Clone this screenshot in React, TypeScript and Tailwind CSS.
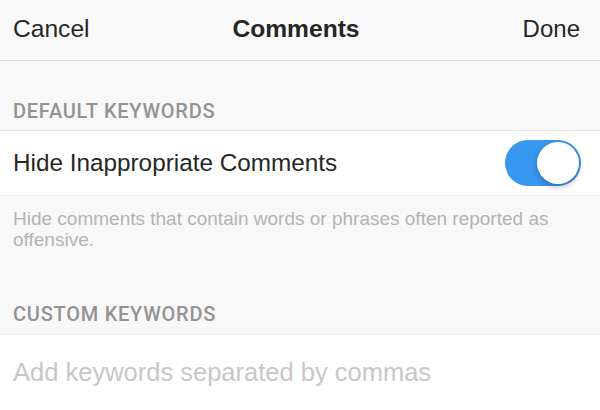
const font = { fontFamily: '"Liberation Sans", Arial, sans-serif' };

const SectionHeader = ({ label, spacing }: { label: string; spacing: string }) => (
  <div
    className={`px-[13px] ${spacing} text-[20px] leading-[19px] font-medium tracking-[0.75px] text-[#939393]`}
    style={{ fontFamily: 'Roboto, "Liberation Sans", sans-serif' }}
  >
    {label}
  </div>
);

const Toggle = ({ on }: { on: boolean }) => (
  <div
    className={`relative h-[46px] w-[76px] rounded-full ${on ? "bg-[#3897f0]" : "bg-[#e5e5e5]"}`}
  >
    <div
      className={`absolute top-[2px] h-[42px] w-[42px] rounded-full bg-white shadow-[0_3px_6px_rgba(0,0,0,0.25)] ${
        on ? "right-[2px]" : "left-[2px]"
      }`}
    />
  </div>
);

export default function App() {
  return (
    <div className="h-[410px] w-[600px] overflow-hidden bg-[#f8f8f8]" style={font}>
      {/* nav bar */}
      <div className="grid h-[61px] grid-cols-3 items-center border-b border-[#d9d9d9] bg-[#f9f9f9] px-[13px] pb-[2px] text-[24px] leading-[24px] text-[#262626]">
        <span className="text-[24.6px]">Cancel</span>
        <span className="-ml-[8px] justify-self-center font-bold text-[24.6px]">Comments</span>
        <span className="justify-self-end pr-[7px]">Done</span>
      </div>

      <SectionHeader label="DEFAULT KEYWORDS" spacing="pt-[41px] pb-[9px]" />

      <div className="flex h-[66px] items-center justify-between border-y border-t-[#e3e3e3] border-b-[#ededed] bg-white pl-[13px] pr-[19px]">
        <span className="text-[24.3px] leading-[24px] text-[#262626]">Hide Inappropriate Comments</span>
        <Toggle on />
      </div>

      <p className="px-[13px] pt-[12px] text-[19px] leading-[21px] text-[#b3b3b3]">
        Hide comments that contain words or phrases often reported as offensive.
      </p>

      <SectionHeader label="CUSTOM KEYWORDS" spacing="pt-[55px] pb-[10px]" />

      <div className="h-[80px] border-t border-[#ededed] bg-white px-[13px] pt-[23px]">
        <input
          className="w-full bg-transparent text-[25.5px] leading-[25px] text-[#262626] outline-none placeholder:text-[#c7c7c7]"
          style={font}
          placeholder="Add keywords separated by commas"
        />
      </div>
    </div>
  );
}
